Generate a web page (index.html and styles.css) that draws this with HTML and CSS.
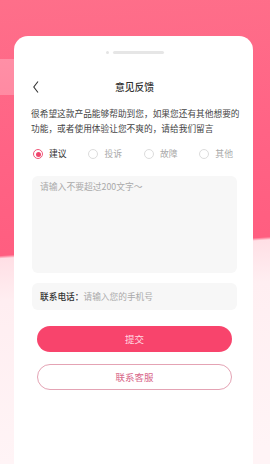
FILE: index.html
```html
<!DOCTYPE html>
<html lang="zh-CN">
<head>
<meta charset="utf-8">
<title>意见反馈</title>
<link rel="stylesheet" href="styles.css">
</head>
<body>
<div class="screen">
  <div class="card">
    <div class="handle"><span class="dot"></span><span class="bar"></span></div>
    <div class="header">
      <svg class="back" width="6" height="12" viewBox="0 0 6 12"><polyline points="5,0.5 0.8,6 5,11.5" fill="none" stroke="#333" stroke-width="1.1"/></svg>
      <div class="title">意见反馈</div>
    </div>
    <p class="desc">很希望这款产品能够帮助到您，如果您还有其他想要的<br>功能，或者使用体验让您不爽的，请给我们留言</p>
    <div class="radios">
      <div class="radio checked"><span class="circle"></span><span class="label">建议</span></div>
      <div class="radio"><span class="circle"></span><span class="label">投诉</span></div>
      <div class="radio"><span class="circle"></span><span class="label">故障</span></div>
      <div class="radio"><span class="circle"></span><span class="label">其他</span></div>
    </div>
    <div class="textarea">请输入不要超过200文字～</div>
    <div class="phone"><span class="phone-label">联系电话：</span><span class="placeholder">请输入您的手机号</span></div>
    <div class="btn submit">提交</div>
    <div class="btn contact">联系客服</div>
  </div>
</div>
</body>
</html>
```
FILE: styles.css
```css
html, body {
  margin: 0;
  padding: 0;
}
body {
  font-family: "Noto Sans CJK SC", "Noto Sans", sans-serif;
  color: #333;
}
.screen {
  width: 270px;
  height: 464px;
  overflow: hidden;
  background:
    linear-gradient(#ff8fa6, #ff8aa2) 0 59px / 20px 36px no-repeat,
    linear-gradient(176deg, #fe6f8a 0px, #ff6385 150px, #ff5e80 255px, #ffdfe5 258px, #ffeef1 300px, #fff4f6 464px);
  padding-top: 36px;
  box-sizing: border-box;
}
.card {
  margin-left: 14px;
  width: 239px;
  height: 428px;
  background: #fff;
  border-radius: 14px 14px 0 0;
  padding-top: 15px;
  box-sizing: border-box;
}
.handle {
  display: flex;
  justify-content: center;
  align-items: center;
  gap: 4px;
  height: 3px;
  padding-left: 3px;
}
.dot {
  width: 3px;
  height: 3px;
  border-radius: 50%;
  background: #e4e4e4;
}
.bar {
  width: 51px;
  height: 3px;
  border-radius: 2px;
  background: #e6e6e6;
}
.header {
  margin-top: 22px;
  height: 22px;
  display: flex;
  align-items: center;
  position: relative;
  padding-left: 19px;
}
.back {
  display: block;
}
.title {
  position: absolute;
  left: 0;
  right: 0;
  text-align: center;
  font-size: 9.8px;
  font-weight: 500;
  color: #333;
  line-height: 22px;
  padding-left: 2px;
}
.desc {
  margin: 8px 0 0 17px;
  font-size: 8.7px;
  line-height: 15px;
  color: #444;
  white-space: nowrap;
}
.radios {
  margin: 10px 20px 0 19px;
  height: 16px;
  display: flex;
  justify-content: space-between;
  align-items: center;
}
.radio {
  display: flex;
  align-items: center;
  gap: 6px;
}
.circle {
  width: 10px;
  height: 10px;
  border-radius: 50%;
  border: 1px solid #dcdcdc;
  box-sizing: border-box;
  display: flex;
  align-items: center;
  justify-content: center;
}
.radio.checked .circle {
  border-color: #f0577a;
}
.radio.checked .circle::after {
  content: "";
  width: 5px;
  height: 5px;
  border-radius: 50%;
  background: #f0456d;
}
.label {
  font-size: 8.8px;
  color: #aaa;
  line-height: 16px;
}
.radio.checked .label {
  color: #333;
}
.textarea {
  margin: 14px 16px 0 18px;
  height: 97px;
  background: #f7f7f7;
  border-radius: 6px;
  padding: 5px 8px;
  box-sizing: border-box;
  font-size: 8.8px;
  line-height: 12px;
  color: #aaa;
}
.phone {
  margin: 10px 16px 0 18px;
  height: 27px;
  background: #f7f7f7;
  border-radius: 6px;
  padding: 0 8px;
  box-sizing: border-box;
  display: flex;
  align-items: center;
  font-size: 8.7px;
}
.phone-label {
  color: #333;
  font-weight: 500;
}
.placeholder {
  color: #aaa;
}
.btn {
  margin: 16px 21px 0 23px;
  height: 26px;
  border-radius: 13px;
  display: flex;
  align-items: center;
  justify-content: center;
  font-size: 9.5px;
  box-sizing: border-box;
}
.submit {
  background: #f8446c;
  color: #ffdbe3;
}
.contact {
  margin-top: 12px;
  border: 1px solid #e4a3b4;
  color: #d8678a;
  background: #fff;
}
```
